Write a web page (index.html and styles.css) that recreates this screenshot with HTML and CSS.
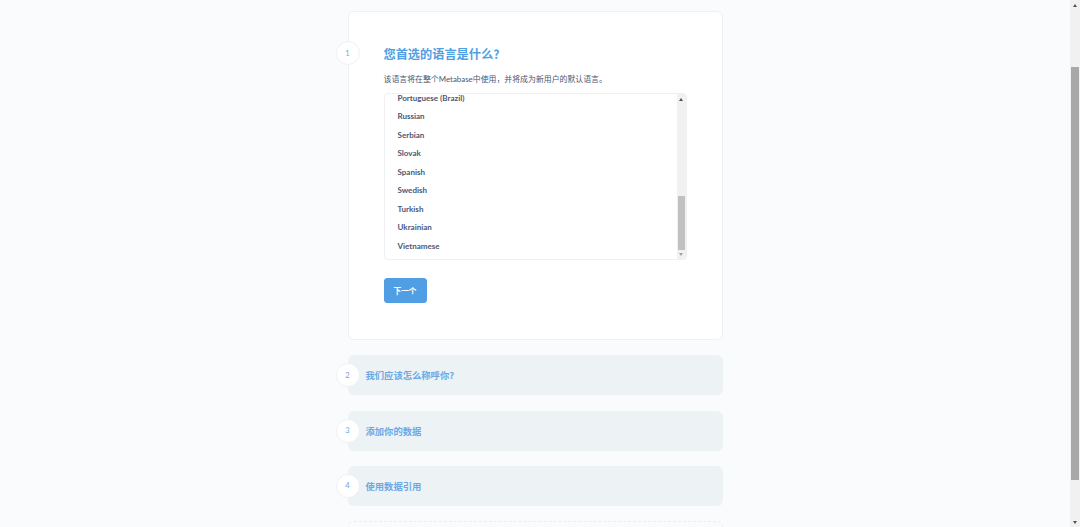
FILE: index.html
```html
<!DOCTYPE html>
<html lang="zh-CN">
<head>
<meta charset="utf-8">
<title>Metabase 设置</title>
<link rel="stylesheet" href="styles.css">
</head>
<body>
<div class="viewport">
  <div class="steps">
    <section class="step step-active">
      <div class="step-num">1</div>
      <h2 class="step-title">您首选的语言是什么?</h2>
      <p class="step-desc">该语言将在整个Metabase中使用，并将成为新用户的默认语言。</p>
      <div class="lang-box">
        <ul class="lang-list">
          <li>Portuguese (Brazil)</li>
          <li>Russian</li>
          <li>Serbian</li>
          <li>Slovak</li>
          <li>Spanish</li>
          <li>Swedish</li>
          <li>Turkish</li>
          <li>Ukrainian</li>
          <li>Vietnamese</li>
        </ul>
        <div class="sbar sbar-inner">
          <div class="sbar-btn"><span class="arrow-up"></span></div>
          <div class="sbar-track"><div class="sbar-thumb thumb-inner"></div></div>
          <div class="sbar-btn"><span class="arrow-down"></span></div>
        </div>
      </div>
      <button class="btn-next">下一个</button>
    </section>

    <section class="step step-collapsed">
      <div class="step-num">2</div>
      <h3 class="step-label">我们应该怎么称呼你?</h3>
    </section>

    <section class="step step-collapsed">
      <div class="step-num">3</div>
      <h3 class="step-label">添加你的数据</h3>
    </section>

    <section class="step step-collapsed">
      <div class="step-num">4</div>
      <h3 class="step-label">使用数据引用</h3>
    </section>

    <section class="step step-final"></section>
  </div>
</div>
<div class="sbar sbar-page">
  <div class="sbar-btn"><span class="arrow-up dark"></span></div>
  <div class="sbar-track page-track"><div class="sbar-thumb thumb-page"></div></div>
  <div class="sbar-btn"><span class="arrow-down dark"></span></div>
</div>
</body>
</html>
```

FILE: styles.css
```css
* { box-sizing: border-box; }

html, body {
  margin: 0;
  padding: 0;
  height: 527px;
  overflow: hidden;
}

body {
  display: flex;
  background: #f9fbfc;
  font-family: Lato, "Noto Sans CJK SC", sans-serif;
  color: #4c5773;
}

.viewport {
  flex: 1;
  overflow: hidden;
  display: flex;
  justify-content: center;
  padding-top: 11px;
}

.steps {
  width: 375px;
  display: flex;
  flex-direction: column;
  gap: 15.3px;
}

.step {
  position: relative;
  border-radius: 6px;
  flex-shrink: 0;
}

.step-num {
  position: absolute;
  left: -13px;
  width: 24px;
  height: 24px;
  border-radius: 50%;
  background: #fff;
  border: 1px solid #eef1f4;
  display: flex;
  align-items: center;
  justify-content: center;
  font-size: 7.5px;
  color: #6aa6e6;
  font-family: Lato, sans-serif;
}

.step-active {
  background: #fff;
  border: 1px solid #eef0f3;
  padding: 32px 36px 36px 35px;
}

.step-active .step-num {
  top: 29px;
}

.step-title {
  margin: 0 0 8.5px;
  font-size: 12.2px;
  line-height: 20px;
  font-weight: 700;
  color: #509ee3;
  font-family: "Noto Sans CJK SC", Lato, sans-serif;
}

.step-desc {
  margin: 0 0 7.5px;
  font-size: 7.9px;
  line-height: 13px;
  color: #4c5773;
  font-family: Lato, "Noto Sans CJK SC", sans-serif;
}

.lang-box {
  height: 167px;
  width: 303px;
  border: 1px solid #eef0f3;
  border-radius: 4px;
  display: flex;
  overflow: hidden;
}

.lang-list {
  flex: 1;
  margin: 0;
  padding: 0 0 4px 13px;
  list-style: none;
  display: flex;
  flex-direction: column;
  justify-content: flex-end;
  overflow: hidden;
}

.lang-list li {
  flex-shrink: 0;
  height: 18.5px;
  line-height: 18.5px;
  font-size: 8px;
  font-weight: 700;
  color: #4c5773;
}

.sbar {
  display: flex;
  flex-direction: column;
  background: #f1f1f1;
}

.sbar-inner {
  width: 9px;
}

.sbar-page {
  width: 10px;
  height: 527px;
  flex-shrink: 0;
}

.sbar-btn {
  height: 10px;
  display: flex;
  align-items: center;
  justify-content: center;
  flex-shrink: 0;
}

.sbar-inner .sbar-btn:last-child { height: 9px; }

.arrow-up,
.arrow-down {
  width: 0;
  height: 0;
  border-left: 2.5px solid transparent;
  border-right: 2.5px solid transparent;
}

.arrow-up { border-bottom: 3px solid #505050; }
.arrow-down { border-top: 3px solid #a3a3a3; }
.arrow-up.dark { border-bottom-color: #505050; }
.arrow-down.dark { border-top-color: #505050; }

.sbar-track {
  flex: 1;
  display: flex;
  flex-direction: column;
  justify-content: flex-end;
  padding: 0 1px;
}

.thumb-inner {
  height: 54px;
  background: #c1c1c1;
}

.page-track {
  justify-content: flex-start;
  padding-top: 57px;
}

.thumb-page {
  height: 413px;
  background: #a8a8a8;
}

.btn-next {
  margin-top: 18px;
  height: 25px;
  width: 43px;
  padding: 0;
  border: 1px solid #509ee3;
  border-radius: 3px;
  background: #509ee3;
  color: #fff;
  font-family: "Noto Sans CJK SC", sans-serif;
  font-size: 7.7px;
  font-weight: 700;
  display: block;
}

.step-collapsed {
  height: 40px;
  background: #edf2f5;
  display: flex;
  align-items: center;
  padding-left: 18px;
}

.step-collapsed .step-num {
  top: 8px;
  left: -12px;
}

.step-label {
  margin: 0;
  font-size: 9.3px;
  font-weight: 700;
  color: #6aa9e6;
  font-family: "Noto Sans CJK SC", sans-serif;
}

.step-final {
  height: 40px;
  border: 1px dashed #eceff2;
}
```
